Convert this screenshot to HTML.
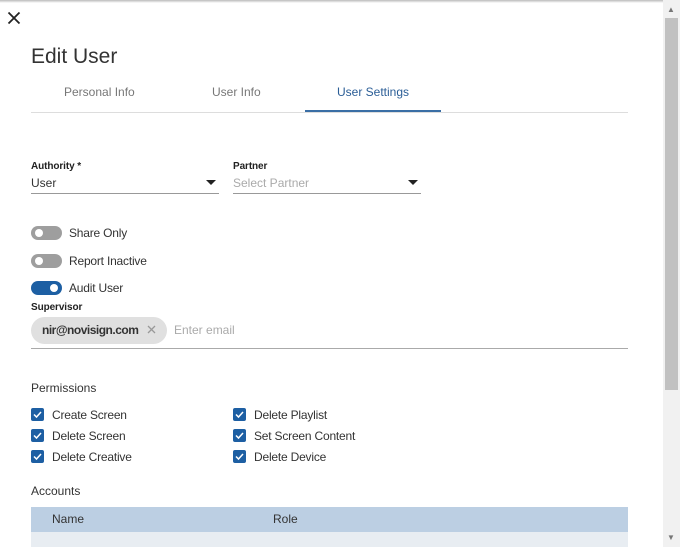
<!DOCTYPE html>
<html><head><style>
*{box-sizing:border-box;margin:0;padding:0}
body{width:680px;height:547px;overflow:hidden;background:#fff;font-family:"Liberation Sans",sans-serif;color:#333;position:relative}
.a{position:absolute;white-space:nowrap}
.tog{position:absolute;width:31px;height:14px;border-radius:7px;background:#9e9e9e}
.tog::after{content:"";position:absolute;top:3px;left:4px;width:8px;height:8px;border-radius:50%;background:#fff}
.tog.on{background:#1d5fa3}
.tog.on::after{left:19px}
.cb{position:absolute;width:13px;height:13px;background:#1d5fa3;border-radius:2px}
.cb svg{position:absolute;left:0;top:0}
.lbl{font-size:12px;color:#333;letter-spacing:-0.2px}
.sm{font-size:10px;color:#222;font-weight:bold;letter-spacing:-0.1px}
</style></head><body>
<div class="a" style="left:0;top:0;width:680px;height:3px;background:linear-gradient(#bbb,#fff)"></div>
<svg class="a" style="left:7px;top:11px" width="14" height="14" viewBox="0 0 14 14"><path d="M1.5 1.5L12.5 12.5M12.5 1.5L1.5 12.5" stroke="#222" stroke-width="1.8"/></svg>
<div class="a" style="left:31px;top:45px;font-size:21px;color:#333">Edit User</div>
<div class="a" style="left:64px;top:85px;font-size:12px;color:#777">Personal Info</div>
<div class="a" style="left:212px;top:85px;font-size:12px;color:#777">User Info</div>
<div class="a" style="left:337px;top:85px;font-size:12px;color:#2a5d96">User Settings</div>
<div class="a" style="left:31px;top:112px;width:597px;height:1px;background:#ddd"></div>
<div class="a" style="left:305px;top:110px;width:136px;height:2px;background:#3a6ea5"></div>
<div class="a sm" style="left:31px;top:161px">Authority *</div>
<div class="a" style="left:31px;top:176px;font-size:12px;color:#333">User</div>
<svg class="a" style="left:206px;top:180px" width="10" height="6"><path d="M0 0H10L5 5Z" fill="#222"/></svg>
<div class="a" style="left:31px;top:193px;width:188px;height:1px;background:#999"></div>
<div class="a sm" style="left:233px;top:161px">Partner</div>
<div class="a" style="left:233px;top:176px;font-size:12px;color:#aaa">Select Partner</div>
<svg class="a" style="left:408px;top:180px" width="10" height="6"><path d="M0 0H10L5 5Z" fill="#222"/></svg>
<div class="a" style="left:233px;top:193px;width:188px;height:1px;background:#999"></div>
<div class="tog" style="left:31px;top:226px"></div><div class="a lbl" style="left:69px;top:226px">Share Only</div>
<div class="tog" style="left:31px;top:254px"></div><div class="a lbl" style="left:69px;top:254px">Report Inactive</div>
<div class="tog on" style="left:31px;top:281px"></div><div class="a lbl" style="left:69px;top:281px">Audit User</div>
<div class="a sm" style="left:31px;top:302px">Supervisor</div>
<div class="a" style="left:31px;top:317px;width:136px;height:27px;border-radius:14px;background:#e0e0e0"></div>
<div class="a" style="left:42px;top:323px;font-size:12px;color:#333;font-weight:bold;letter-spacing:-0.5px">nir@novisign.com</div>
<svg class="a" style="left:147px;top:325px" width="9" height="9"><path d="M1 1L8 8M8 1L1 8" stroke="#999" stroke-width="1.3"/></svg>
<div class="a" style="left:174px;top:323px;font-size:12px;color:#aaa">Enter email</div>
<div class="a" style="left:31px;top:348px;width:597px;height:1px;background:#aaa"></div>
<div class="a" style="left:31px;top:381px;font-size:12px">Permissions</div>
<div id="cbs"></div>
<div class="a" style="left:31px;top:484px;font-size:12px">Accounts</div>
<div class="a" style="left:31px;top:507px;width:597px;height:25px;background:#bccfe3"></div>
<div class="a" style="left:52px;top:512px;font-size:12px">Name</div>
<div class="a" style="left:273px;top:512px;font-size:12px">Role</div>
<div class="a" style="left:31px;top:532px;width:597px;height:15px;background:#e8edf2"></div>
<div class="a" style="left:663px;top:0;width:17px;height:547px;background:#f1f1f1"></div>
<div class="a" style="left:665px;top:18px;width:13px;height:372px;background:#c1c1c1"></div>
<div class="a" style="left:667px;top:5px;font-size:8px;color:#777">▲</div>
<div class="a" style="left:667px;top:533px;font-size:8px;color:#777">▼</div>
<script>
var items=[[31,408,"Create Screen"],[31,429,"Delete Screen"],[31,450,"Delete Creative"],[233,408,"Delete Playlist"],[233,429,"Set Screen Content"],[233,450,"Delete Device"]];
var h="";items.forEach(function(i){h+='<div class="cb" style="left:'+i[0]+'px;top:'+i[1]+'px"><svg width="13" height="13" viewBox="0 0 13 13"><path d="M3 6.5L5.5 9L10 4" stroke="#fff" stroke-width="1.5" fill="none"/></svg></div><div class="a lbl" style="left:'+(i[0]+21)+'px;top:'+i[1]+'px">'+i[2]+'</div>';});
document.getElementById("cbs").innerHTML=h;
</script>
</body></html>
